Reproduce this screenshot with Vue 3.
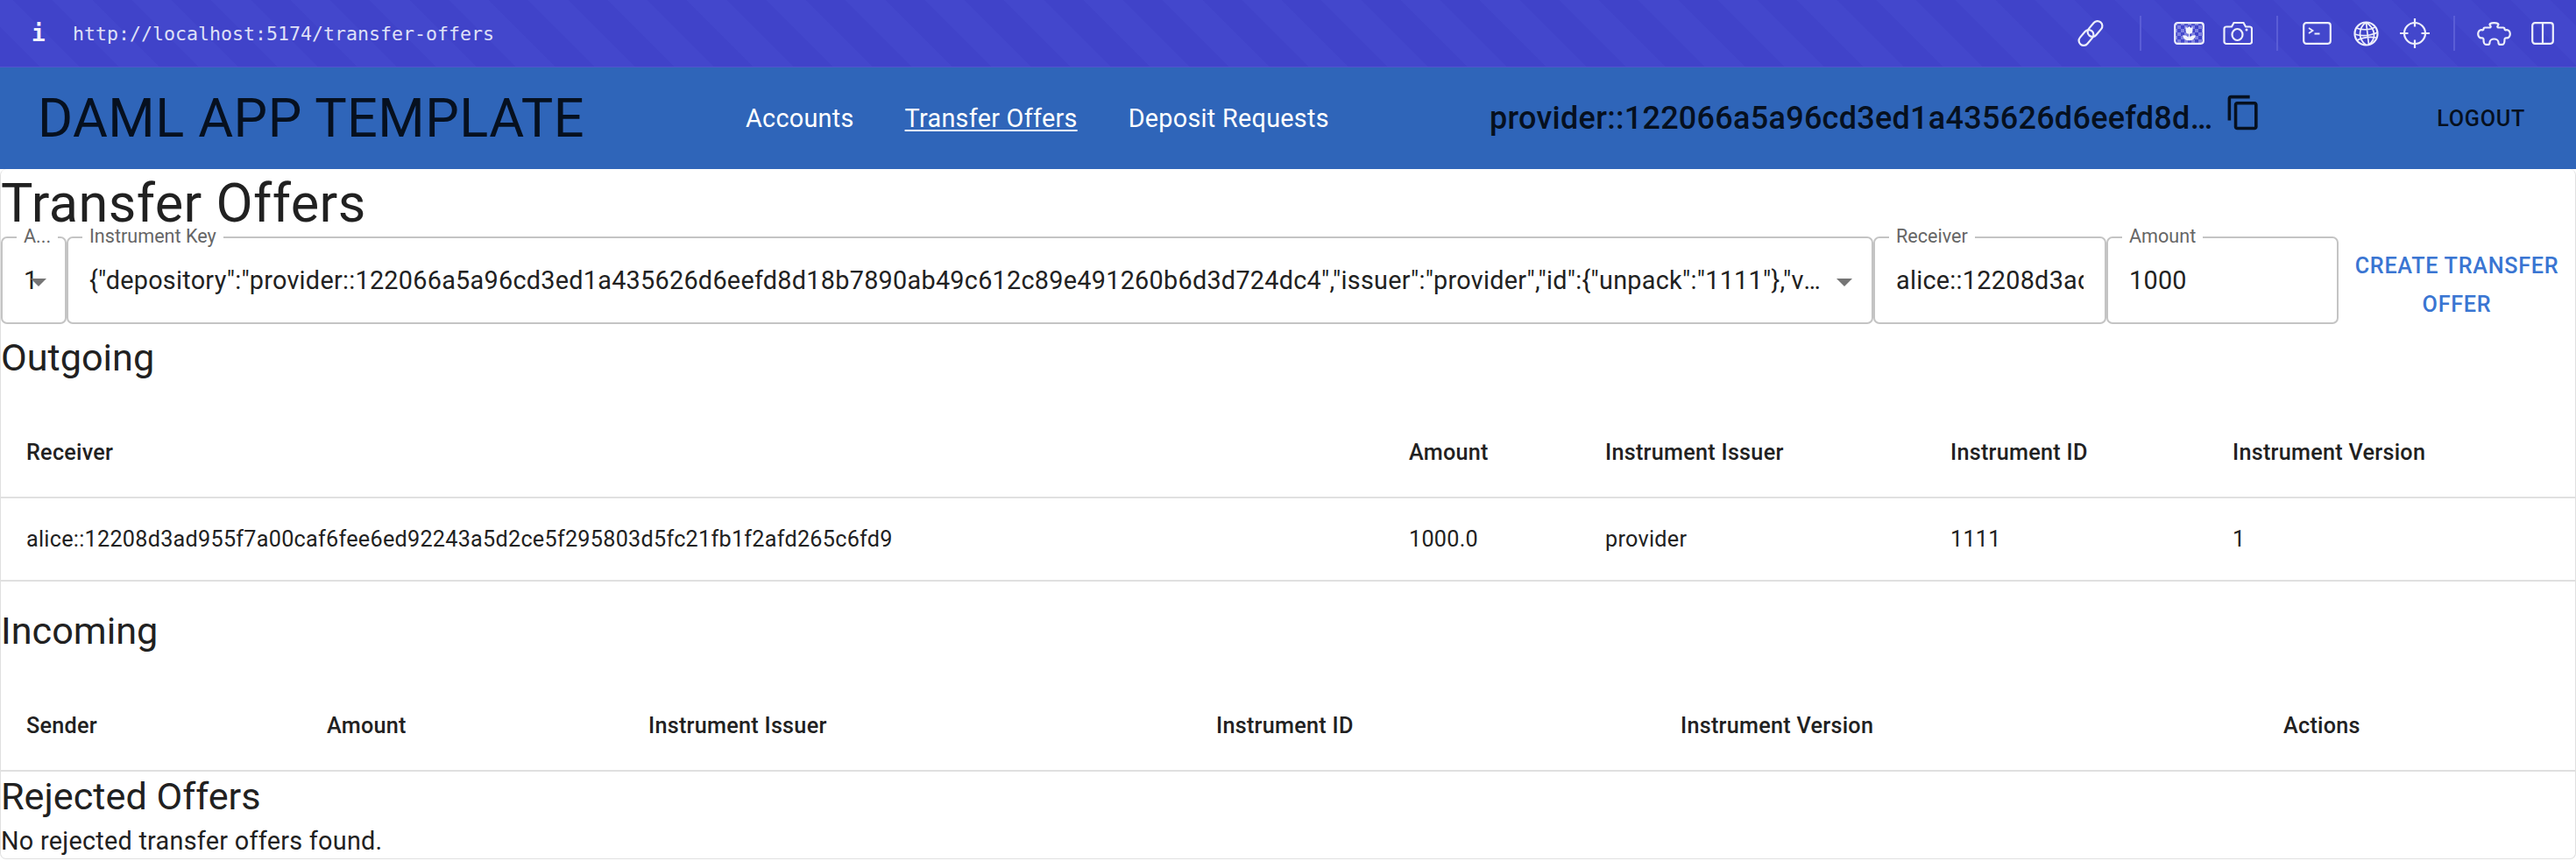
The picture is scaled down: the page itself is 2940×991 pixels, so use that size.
<script setup>
const outgoingRows = [
  {
    receiver: 'alice::12208d3ad955f7a00caf6fee6ed92243a5d2ce5f295803d5fc21fb1f2afd265c6fd9',
    amount: '1000.0',
    issuer: 'provider',
    id: '1111',
    version: '1'
  }
]
const outgoingHead = ['Receiver', 'Amount', 'Instrument Issuer', 'Instrument ID', 'Instrument Version']
const incomingHead = ['Sender', 'Amount', 'Instrument Issuer', 'Instrument ID', 'Instrument Version', 'Actions']
const instrumentKey = '{"depository":"provider::122066a5a96cd3ed1a435626d6eefd8d18b7890ab49c612c89e491260b6d3d724dc4","issuer":"provider","id":{"unpack":"1111"},"version":"1"}'
</script>

<template>
  <div class="page">
    <!-- browser toolbar -->
    <div class="browser-bar">
      <div class="info">i</div>
      <div class="url">http://localhost:5174/transfer-offers</div>
      <div class="tools">
        <span class="slot slot-link">
          <svg width="32" height="32" viewBox="0 0 32 32" fill="none" stroke="#eceefb" stroke-width="2.2">
            <rect x="-10" y="-5.5" width="20" height="11" rx="5.5" transform="translate(11 21) rotate(-50)" />
            <rect x="-10" y="-5.5" width="20" height="11" rx="5.5" transform="translate(21 11) rotate(-50)" />
          </svg>
        </span>
        <span class="sep sep-first"></span>
        <span class="slot">
          <svg width="35" height="26" viewBox="0 0 35 26" fill="none">
            <defs>
              <pattern id="checks" width="8" height="8" patternUnits="userSpaceOnUse">
                <rect x="0" y="0" width="4" height="4" fill="#7d80e0" />
                <rect x="4" y="4" width="4" height="4" fill="#7d80e0" />
              </pattern>
            </defs>
            <rect x="1.2" y="1.2" width="32.6" height="23.6" rx="3" fill="url(#checks)" stroke="#eceefb" stroke-width="2.2" />
            <path d="M13.5 5.5l2 1.6 2-2 2 2 2-1.6v4.2a4 4 0 0 1-8 0z" fill="#f4f5fd" />
            <path d="M17.5 13v7.5M17.5 20.5c-3.5 0-6-2-6.500-4.500 3 0 5.500 1.500 6.500 4.500zM17.500 20.500c3.500 0 6-2 6.500-4.500-3 0-5.500 1.500-6.500 4.500z" fill="#f4f5fd" stroke="#f4f5fd" stroke-width="1.400" />
          </svg>
        </span>
        <span class="slot">
          <svg width="34" height="28" viewBox="0 0 34 28" fill="none" stroke="#eceefb" stroke-width="2.2">
            <path d="M3.500 6.500h6.500l2.500-4.500h11l2.500 4.500h4.500a2.500 2.500 0 0 1 2.500 2.500v14.500a2.500 2.500 0 0 1-2.500 2.500h-26.500a2.500 2.500 0 0 1-2.500-2.500v-14.500a2.500 2.500 0 0 1 2.500-2.500z" />
            <ellipse cx="16.500" cy="15.500" rx="6" ry="6.500" />
            <circle cx="27" cy="10" r="1.500" fill="#eceefb" stroke="none" />
          </svg>
        </span>
        <span class="sep"></span>
        <span class="slot">
          <svg width="33" height="26" viewBox="0 0 33 26" fill="none" stroke="#eceefb" stroke-width="2.200">
            <rect x="1.200" y="1.200" width="30.600" height="23.600" rx="3" />
            <path d="M7 7l4.500 3-4.500 3M13.500 13.500h6" stroke-width="1.800" />
          </svg>
        </span>
        <span class="slot">
          <svg width="29" height="29" viewBox="0 0 29 29" fill="none" stroke="#eceefb" stroke-width="1.700">
            <circle cx="14.500" cy="14.500" r="13" stroke-width="2.200" />
            <path d="M14.500 1.500c-5 3.500-7 8-7 13s2 9.500 7 13M14.500 1.500c5 3.500 8.500 8 9 13s-2 9.500-6 12.500" />
            <path d="M14.500 1.500l3 25.500M3.500 8c6 2.500 15 2.500 21.500-1M1.500 15c7 2.500 17 2 26-2M4 22c6-3 14-4.500 22-3" />
          </svg>
        </span>
        <span class="slot">
          <svg width="34" height="34" viewBox="0 0 34 34" fill="none" stroke="#eceefb" stroke-width="2.200">
            <circle cx="17" cy="17" r="12" />
            <path d="M17 0v9.500M17 24.500v9.500M0 17h9.500M24.500 17h9.500" />
          </svg>
        </span>
        <span class="sep"></span>
        <span class="slot">
          <svg width="39" height="27" viewBox="0 0 39 27" fill="none" stroke="#eceefb" stroke-width="2.200">
            <path d="M9 6.500H14.500C16 6.500 16 5 15 4C13.500 2.500 15.500 1.200 19.500 1.200C23.500 1.200 25.500 2.500 24 4C23 5 23 6.500 24.500 6.500H30C31 6.500 31.500 7 31.500 8C31.500 9.500 32.500 9.500 33.500 9.200C36 8.800 37.800 11 37.800 13.800C37.800 16.500 36 18.800 33.500 18.400C32.500 18.200 31.500 18.500 31.500 20C31.500 24 30.500 25.800 29 25.800H26C24.500 25.800 24.500 24.500 24.500 23.500C24.500 21 22 19.500 19.500 19.500C17 19.500 14.500 21 14.500 23.500C14.500 24.500 14.500 25.800 13 25.800H10C8.500 25.800 7.500 24 7.500 20C7.500 18.500 6.500 18.200 5.500 18.400C3 18.800 1.200 16.500 1.200 13.800C1.200 11 3 8.800 5.500 9.200C6.500 9.500 7.500 9.500 7.500 8C7.500 7 8 6.500 9 6.500Z" />
          </svg>
        </span>
        <span class="slot">
          <svg width="26" height="26" viewBox="0 0 26 26" fill="none" stroke="#eceefb" stroke-width="2.200">
            <rect x="1.200" y="1.200" width="23.600" height="23.600" rx="3" />
            <path d="M13 1.200v23.600" />
          </svg>
        </span>
      </div>
    </div>

    <!-- app bar -->
    <header class="app-bar">
      <div class="brand">DAML APP TEMPLATE</div>
      <nav class="links">
        <a class="link">Accounts</a>
        <a class="link active">Transfer Offers</a>
        <a class="link">Deposit Requests</a>
      </nav>
      <div class="party">
        <span class="party-id">provider::122066a5a96cd3ed1a435626d6eefd8d18b7890ab49c612c89e491260b6d3d724dc4</span>
        <svg class="copy" width="43" height="43" viewBox="0 0 24 24" fill="#06101f">
          <path d="M16 1H4c-1.100 0-2 .9-2 2v14h2V3h12V1zm3 4H8c-1.100 0-2 .9-2 2v14c0 1.100.9 2 2 2h11c1.100 0 2-.9 2-2V7c0-1.100-.9-2-2-2zm0 16H8V7h11v14z" />
        </svg>
      </div>
      <div class="logout">Logout</div>
    </header>

    <main class="paper">
      <h1 class="title">Transfer Offers</h1>

      <form class="form-row" @submit.prevent>
        <div class="field field-account">
          <span class="field-label">A...</span>
          <span class="field-value">1</span>
          <span class="arrow"></span>
        </div>
        <div class="field field-key">
          <span class="field-label">Instrument Key</span>
          <span class="field-value ellipsis">{{ instrumentKey }}</span>
          <span class="arrow"></span>
        </div>
        <div class="field field-receiver">
          <span class="field-label">Receiver</span>
          <span class="field-value">alice::12208d3ad955f7a00caf6fee6ed92243a5d2ce5f295803d5fc21fb1f2afd265c6fd9</span>
        </div>
        <div class="field field-amount">
          <span class="field-label">Amount</span>
          <span class="field-value">1000</span>
        </div>
        <button class="create-btn" type="submit">Create Transfer Offer</button>
      </form>

      <h2 class="section outgoing-title">Outgoing</h2>
      <table class="data-table outgoing">
        <colgroup>
          <col class="o1"><col class="o2"><col class="o3"><col class="o4"><col class="o5">
        </colgroup>
        <thead>
          <tr><th v-for="h in outgoingHead" :key="h">{{ h }}</th></tr>
        </thead>
        <tbody>
          <tr v-for="row in outgoingRows" :key="row.receiver">
            <td>{{ row.receiver }}</td>
            <td>{{ row.amount }}</td>
            <td>{{ row.issuer }}</td>
            <td>{{ row.id }}</td>
            <td>{{ row.version }}</td>
          </tr>
        </tbody>
      </table>

      <h2 class="section incoming-title">Incoming</h2>
      <table class="data-table incoming">
        <colgroup>
          <col class="i1"><col class="i2"><col class="i3"><col class="i4"><col class="i5"><col class="i6">
        </colgroup>
        <thead>
          <tr><th v-for="h in incomingHead" :key="h">{{ h }}</th></tr>
        </thead>
      </table>

      <h2 class="section rejected-title">Rejected Offers</h2>
      <p class="empty">No rejected transfer offers found.</p>
    </main>
  </div>
</template>

<style>
html, body {
  margin: 0;
  background: #fff;
}
</style>

<style scoped>
* {
  box-sizing: border-box;
}

.page {
  width: 2940px;
  height: 991px;
  overflow: hidden;
  font-family: Roboto, "Liberation Sans", sans-serif;
  color: #212121;
  background: #fff;
}

/* browser bar */
.browser-bar {
  height: 77px;
  display: flex;
  align-items: center;
  padding-left: 36px;
  border-bottom: 1px solid #5154ce;
  background: repeating-linear-gradient(45deg, #4043c9 0 32px, #4347cc 32px 64px);
}

.info {
  width: 47px;
  font-family: "DejaVu Sans Mono", monospace;
  font-size: 26px;
  font-weight: 700;
  color: #f2f3fd;
}

.url {
  font-family: "DejaVu Sans Mono", monospace;
  font-size: 21.600px;
  color: #dfe0f7;
}

.tools {
  margin-left: auto;
  padding-right: 10px;
  display: flex;
  align-items: center;
}

.slot {
  width: 56px;
  height: 40px;
  display: flex;
  align-items: center;
  justify-content: center;
}

.slot-link {
  margin-right: 12px;
}

.sep {
  width: 2px;
  height: 40px;
  margin: 0 16px;
  background: #5a5dd6;
}

.sep-first {
  margin-right: 26px;
}

/* app bar */
.app-bar {
  height: 116px;
  display: flex;
  align-items: center;
  padding: 0 58px 0 43px;
  background: #2f65b9;
  color: #06101f;
}

.brand {
  width: 808px;
  font-size: 61.200px;
  letter-spacing: 0.00735em;
  white-space: nowrap;
}

.links {
  width: 849px;
  display: flex;
  gap: 58px;
}

.link {
  font-size: 28.800px;
  letter-spacing: 0.00938em;
  color: #fff;
}

.link.active {
  text-decoration: underline;
  text-underline-offset: 3px;
}

.party {
  display: flex;
  align-items: center;
  gap: 12px;
}

.party-id {
  max-width: 827px;
  font-size: 36px;
  font-weight: 500;
  letter-spacing: 0.0075em;
  white-space: nowrap;
  overflow: hidden;
  text-overflow: ellipsis;
}

.copy {
  margin-bottom: 14px;
}

.logout {
  margin-left: auto;
  font-size: 25.200px;
  font-weight: 500;
  letter-spacing: 0.02857em;
  text-transform: uppercase;
}

/* page body */
.paper {
  height: 788px;
  border: 1px solid #e0e0e0;
  border-top: 0;
  border-radius: 7px;
}

.title {
  margin: 0;
  padding-top: 1px;
  font-size: 61.200px;
  font-weight: 400;
  line-height: 76px;
  letter-spacing: 0.00735em;
}

.form-row {
  display: flex;
  height: 100px;
}

.field {
  position: relative;
  height: 100px;
  display: flex;
  align-items: center;
  padding-left: 24px;
  border: 2px solid #c4c4c4;
  border-radius: 7px;
}

.field-account {
  width: 75px;
}

.field-key {
  width: 2062px;
  padding-right: 56px;
}

.field-receiver {
  width: 266px;
  padding-right: 24px;
}

.field-amount {
  width: 265px;
}

.field-label {
  position: absolute;
  top: -14px;
  left: 16px;
  padding: 0 8px;
  background: #fff;
  font-size: 21.600px;
  line-height: 24px;
  color: #666;
  white-space: nowrap;
}

.field-value {
  font-size: 28.800px;
  letter-spacing: 0.00938em;
  white-space: nowrap;
  overflow: hidden;
}

.ellipsis {
  text-overflow: ellipsis;
}

.arrow {
  position: absolute;
  right: 22px;
  top: 46px;
  width: 0;
  height: 0;
  border-left: 9px solid transparent;
  border-right: 9px solid transparent;
  border-top: 9px solid #757575;
}

.field-account .arrow {
  right: 21px;
}

.create-btn {
  flex: 1;
  border: 0;
  padding: 11px 14px 0;
  background: none;
  font-family: inherit;
  font-size: 25.200px;
  font-weight: 500;
  line-height: 44px;
  letter-spacing: 0.02857em;
  text-transform: uppercase;
  color: #3a75d2;
}

.section {
  margin: 0;
  font-size: 43.200px;
  font-weight: 400;
  line-height: 58px;
}

.data-table {
  width: 100%;
  table-layout: fixed;
  border-collapse: collapse;
  font-size: 25.200px;
  letter-spacing: 0.01071em;
}

.data-table th {
  height: 102px;
  padding: 0 29px;
  text-align: left;
  font-weight: 500;
  border-bottom: 2px solid #e0e0e0;
}

.data-table td {
  height: 95px;
  padding: 0 29px;
  border-bottom: 2px solid #e0e0e0;
}

.outgoing-title {
  margin-top: 10px;
}

.outgoing {
  margin-top: 28px;
}

.incoming-title {
  margin-top: 28px;
}

.incoming {
  margin-top: 28px;
}

.o1 { width: 1578px; }
.o2 { width: 224px; }
.o3 { width: 394px; }
.o4 { width: 322px; }

.i1 { width: 343px; }
.i2 { width: 367px; }
.i3 { width: 648px; }
.i4 { width: 530px; }
.i5 { width: 688px; }

.empty {
  margin: 0;
  font-size: 28.800px;
  line-height: 43px;
  letter-spacing: 0.00938em;
}
</style>
